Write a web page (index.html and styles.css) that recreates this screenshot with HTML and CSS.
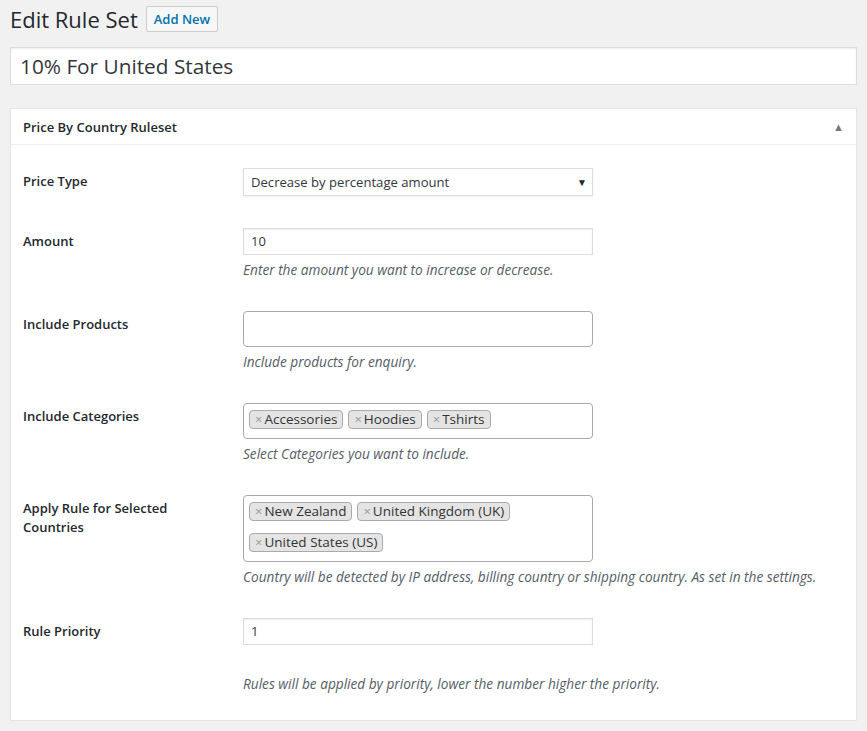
FILE: index.html
```html
<!DOCTYPE html>
<html>
<head>
<meta charset="utf-8">
<link rel="stylesheet" href="styles.css">
</head>
<body>
<div class="wrap">
  <div class="title-bar">
    <h1 class="page-title">Edit Rule Set</h1>
    <a class="add-new">Add New</a>
  </div>
  <div class="title-input">10% For United States</div>

  <div class="postbox">
    <div class="postbox-header">
      <h2 class="hndle">Price By Country Ruleset</h2>
      <span class="toggle">▲</span>
    </div>
    <div class="inside">
      <div class="row">
        <div class="label">Price Type</div>
        <div class="field">
          <div class="select"><span>Decrease by percentage amount</span><span class="caret">▼</span></div>
        </div>
      </div>
      <div class="row">
        <div class="label">Amount</div>
        <div class="field">
          <div class="text-input">10</div>
          <p class="desc">Enter the amount you want to increase or decrease.</p>
        </div>
      </div>
      <div class="row">
        <div class="label">Include Products</div>
        <div class="field">
          <div class="multi"></div>
          <p class="desc">Include products for enquiry.</p>
        </div>
      </div>
      <div class="row">
        <div class="label">Include Categories</div>
        <div class="field">
          <div class="multi">
            <span class="tag"><span class="x">×</span>Accessories</span>
            <span class="tag"><span class="x">×</span>Hoodies</span>
            <span class="tag"><span class="x">×</span>Tshirts</span>
          </div>
          <p class="desc">Select Categories you want to include.</p>
        </div>
      </div>
      <div class="row">
        <div class="label">Apply Rule for Selected Countries</div>
        <div class="field">
          <div class="multi">
            <span class="tag"><span class="x">×</span>New Zealand</span>
            <span class="tag"><span class="x">×</span>United Kingdom (UK)</span>
            <span class="tag"><span class="x">×</span>United States (US)</span>
          </div>
          <p class="desc">Country will be detected by IP address, billing country or shipping country. As set in the settings.</p>
        </div>
      </div>
      <div class="row">
        <div class="label">Rule Priority</div>
        <div class="field">
          <div class="text-input">1</div>
          <p class="desc desc-far">Rules will be applied by priority, lower the number higher the priority.</p>
        </div>
      </div>
    </div>
  </div>
</div>
</body>
</html>
```

FILE: styles.css
```css
html, body {
  margin: 0;
  padding: 0;
  background: #f1f1f1;
}
body {
  font-family: "Open Sans", "Noto Sans", sans-serif;
  color: #23282d;
  font-size: 13px;
}
.wrap {
  padding: 0 10px 0 10px;
}
.title-bar {
  display: flex;
  align-items: center;
  height: 40px;
  gap: 8px;
}
.page-title {
  margin: 0;
  font-size: 22px;
  font-weight: 400;
  line-height: 1;
  position: relative;
  top: -1px;
}
.add-new {
  display: inline-block;
  box-sizing: border-box;
  height: 26px;
  line-height: 24px;
  padding: 0 7px;
  border: 1px solid #ccc;
  border-radius: 2px;
  background: #f7f7f7;
  color: #0073aa;
  font-size: 13px;
  font-weight: 600;
  position: relative;
  top: -1px;
}
.title-input {
  margin-top: 7px;
  box-sizing: border-box;
  height: 38px;
  background: #fff;
  border: 1px solid #ddd;
  box-shadow: inset 0 1px 2px rgba(0,0,0,.07);
  padding: 0 9px;
  font-size: 20.8px;
  line-height: 36px;
  color: #32373c;
}
.postbox {
  margin-top: 23px;
  background: #fff;
  border: 1px solid #e5e5e5;
  box-shadow: 0 1px 1px rgba(0,0,0,.04);
}
.postbox-header {
  display: flex;
  justify-content: space-between;
  align-items: center;
  height: 35px;
  border-bottom: 1px solid #eee;
  padding: 0 12px;
}
.hndle {
  margin: 0;
  font-size: 13px;
  font-weight: 600;
}
.toggle {
  font-size: 11px;
  color: #72777c;
  margin-right: 0;
}
.inside {
  padding: 7px 12px 11px;
}
.row {
  display: grid;
  grid-template-columns: 220px 350px;
}
.label {
  padding: 20px 20px 0 0;
  font-size: 13px;
  font-weight: 600;
  line-height: 19px;
}
.field {
  padding: 16px 0;
}
.select {
  box-sizing: border-box;
  height: 28px;
  border: 1px solid #ddd;
  box-shadow: 0 1px 2px rgba(0,0,0,.07);
  display: flex;
  justify-content: space-between;
  align-items: center;
  padding: 0 5px 0 7px;
  font-size: 13.1px;
  color: #32373c;
}
.caret {
  font-size: 10px;
  color: #23282d;
}
.text-input {
  box-sizing: border-box;
  height: 27px;
  border: 1px solid #ddd;
  box-shadow: inset 0 1px 2px rgba(0,0,0,.07);
  padding: 0 7px;
  line-height: 25px;
  font-size: 13px;
  color: #32373c;
}
.multi {
  box-sizing: border-box;
  min-height: 36px;
  border: 1px solid #aaa;
  border-radius: 4px;
  padding: 0 5px 3px 5px;
  display: flex;
  flex-wrap: wrap;
  align-content: flex-start;
}
.tag {
  box-sizing: border-box;
  height: 19px;
  margin: 6px 5px 6px 0;
  padding: 0 5px 0 5px;
  background: #e4e4e4;
  border: 1px solid #aaa;
  border-radius: 4px;
  font-size: 13.5px;
  line-height: 17px;
  color: #333;
  display: inline-flex;
  align-items: center;
}
.x {
  color: #999;
  margin-right: 2px;
  font-size: 13px;
}
.desc {
  margin: 5px 0 0;
  font-size: 13.65px;
  font-style: italic;
  line-height: 19px;
  color: #555d66;
  white-space: nowrap;
}
.desc-far {
  margin-top: 29px;
}
```
